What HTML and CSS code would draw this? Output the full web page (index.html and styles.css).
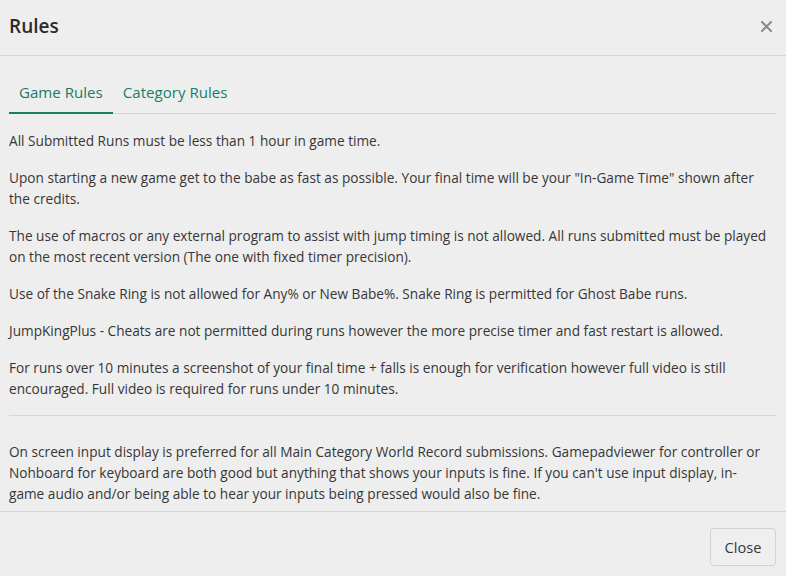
FILE: index.html
```html
<!DOCTYPE html>
<html>
<head>
<meta charset="utf-8">
<link rel="stylesheet" href="styles.css">
</head>
<body>
<div class="modal">
  <div class="modal-header">
    <h2 class="modal-title">Rules</h2>
    <button class="close-x" aria-label="Close">
      <svg width="11" height="11" viewBox="0 0 11 11"><path d="M1 1L10 10M10 1L1 10" stroke="#8a8a8a" stroke-width="2" stroke-linecap="square"/></svg>
    </button>
  </div>
  <div class="modal-body">
    <ul class="tabs">
      <li class="tab active">Game Rules</li>
      <li class="tab">Category Rules</li>
    </ul>
    <p>All Submitted Runs must be less than 1 hour in game time.</p>
    <p>Upon starting a new game get to the babe as fast as possible. Your final time will be your "In-Game Time" shown after the credits.</p>
    <p>The use of macros or any external program to assist with jump timing is not allowed. All runs submitted must be played on the most recent version (The one with fixed timer precision).</p>
    <p>Use of the Snake Ring is not allowed for Any% or New Babe%. Snake Ring is permitted for Ghost Babe runs.</p>
    <p>JumpKingPlus - Cheats are not permitted during runs however the more precise timer and fast restart is allowed.</p>
    <p>For runs over 10 minutes a screenshot of your final time + falls is enough for verification however full video is still encouraged. Full video is required for runs under 10 minutes.</p>
    <hr class="sep">
    <p class="last">On screen input display is preferred for all Main Category World Record submissions. Gamepadviewer for controller or Nohboard for keyboard are both good but anything that shows your inputs is fine. If you can't use input display, in-<br>game audio and/or being able to hear your inputs being pressed would also be fine.</p>
  </div>
  <div class="modal-footer">
    <button class="btn">Close</button>
  </div>
</div>
</body>
</html>
```
FILE: styles.css
```css
* { box-sizing: border-box; }
html, body {
  margin: 0;
  padding: 0;
  background: #eeeeee;
}
body {
  font-family: "Open Sans", "Noto Sans", sans-serif;
  color: #363636;
  font-size: 13.65px;
  line-height: 21px;
}
.modal {
  width: 786px;
  height: 576px;
  display: flex;
  flex-direction: column;
}
.modal-header {
  height: 56px;
  border-bottom: 1px solid #d6d6d6;
  display: flex;
  align-items: center;
  justify-content: space-between;
  padding: 0 10px 2px 9px;
}
.modal-title {
  margin: 0;
  font-size: 19px;
  font-weight: 600;
  color: #2b2b2b;
}
.close-x {
  border: 0;
  background: transparent;
  padding: 0;
  width: 20px;
  height: 20px;
  display: flex;
  align-items: center;
  justify-content: center;
}
.modal-body {
  padding: 20px 10px 0 9px;
  height: 455px;
  overflow: hidden;
}
.tabs {
  list-style: none;
  margin: 0 0 16px 0;
  padding: 0;
  display: flex;
  border-bottom: 1px solid #d4d4d4;
}
.tab {
  padding: 6px 10px 9px 10px;
  font-size: 15.1px;
  color: #16806a;
  line-height: 21px;
  margin-bottom: -1px;
  border-bottom: 2px solid transparent;
}
.tab.active {
  border-bottom-color: #167f5c;
  color: #1a7a66;
}
p {
  margin: 0 0 16px 0;
}
.sep {
  border: 0;
  border-top: 1px solid #d6d6d6;
  margin: 0 0 25px 0;
}
.last { margin-bottom: 0; }
.modal-footer {
  border-top: 1px solid #d6d6d6;
  display: flex;
  justify-content: flex-end;
  padding: 16px 10px 0 0;
  flex: 1;
}
.btn {
  font-family: inherit;
  font-size: 14.6px;
  color: #363636;
  background: #efefef;
  border: 1px solid #d2d2d2;
  border-radius: 4px;
  width: 66px;
  height: 38px;
  padding: 0;
}
```
